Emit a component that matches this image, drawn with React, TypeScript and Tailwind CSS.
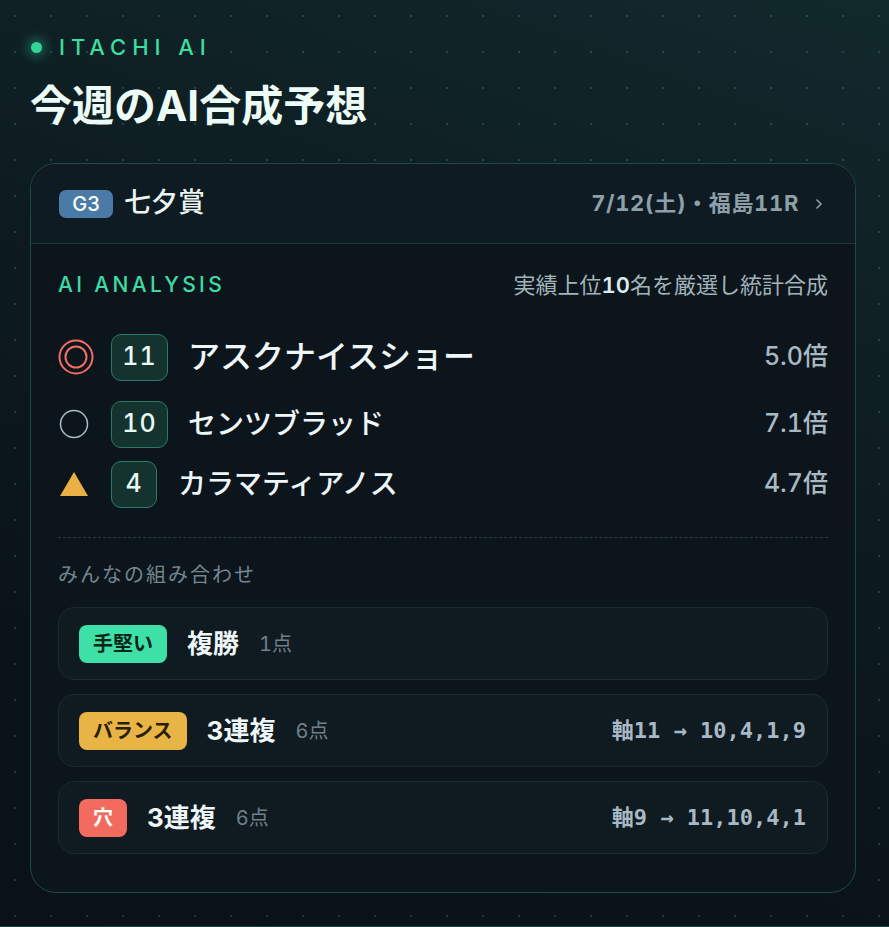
import { ChevronRight } from 'lucide-react';

type Mark = 'double' | 'circle' | 'triangle';

interface Pick {
  mark: Mark;
  num: string;
  name: string;
  odds: string;
  big?: boolean;
}

interface Combo {
  tag: string;
  tagClass: string;
  kind: string;
  points: string;
  detail?: string;
}

const PICKS: Pick[] = [
  { mark: 'double', num: '11', name: 'アスクナイスショー', odds: '5.0倍', big: true },
  { mark: 'circle', num: '10', name: 'センツブラッド', odds: '7.1倍' },
  { mark: 'triangle', num: '4', name: 'カラマティアノス', odds: '4.7倍' },
];

const COMBOS: Combo[] = [
  { tag: '手堅い', tagClass: 'bg-[#3ee0a8] text-[#062519]', kind: '複勝', points: '1点' },
  { tag: 'バランス', tagClass: 'bg-[#e8b445] text-[#2a1d05]', kind: '3連複', points: '6点', detail: '軸11 → 10,4,1,9' },
  { tag: '穴', tagClass: 'bg-[#f26b5e] text-white', kind: '3連複', points: '6点', detail: '軸9 → 11,10,4,1' },
];

function MarkIcon({ mark }: { mark: Mark }) {
  if (mark === 'double') {
    return (
      <svg width="36" height="36" viewBox="0 0 36 36">
        <circle cx="18" cy="18" r="16.5" fill="none" stroke="#ef6f62" strokeWidth="2" />
        <circle cx="18" cy="18" r="10.5" fill="none" stroke="#ef6f62" strokeWidth="2" />
      </svg>
    );
  }
  if (mark === 'circle') {
    return (
      <svg width="36" height="36" viewBox="0 0 36 36">
        <circle cx="16" cy="18" r="13.5" fill="none" stroke="#a9bccb" strokeWidth="1.5" />
      </svg>
    );
  }
  return (
    <svg width="36" height="36" viewBox="0 0 36 36">
      <polygon points="16,6 30,30 2,30" fill="#e9b143" />
    </svg>
  );
}

export default function App() {
  return (
    <div className="min-h-[927px] w-full bg-[linear-gradient(200deg,#12292c_0%,#0d1c21_40%,#0a1319_75%,#0a1218_100%)] font-['Inter','Noto_Sans_CJK_JP',sans-serif] border-b border-[#1b433f]">
      <div className="min-h-[926px] bg-[radial-gradient(circle,rgba(110,190,180,0.22)_1px,transparent_1.6px)] bg-[size:36px_36px] bg-[position:-3px_-2px] px-[30px] pt-[33px]">
        {/* brand */}
        <div className="flex h-[28px] items-center gap-[17px] pl-[1px]">
          <span className="h-[11px] w-[11px] rounded-full bg-[#34d399] shadow-[0_0_12px_3px_rgba(52,211,153,0.45)]" />
          <span className="text-[22px] font-medium tracking-[0.27em] text-[#3ddc9f]">ITACHI AI</span>
        </div>
        <h1 className="mt-[19px] text-[42px] font-bold leading-[52px] text-[#ecfbf6]">今週のAI合成予想</h1>

        {/* card */}
        <div className="mt-[31px] w-[826px] overflow-hidden rounded-[26px] border border-[#1e4a45] bg-[#0c151c]">
          <div className="flex h-[80px] items-center justify-between border-b border-[#1b3a3a] bg-[#0f1b22] px-[28px]">
            <div className="flex items-center gap-[11px]">
              <span className="flex h-[28px] w-[54px] items-center justify-center rounded-[7px] bg-[#4a7aa6] text-[20px] font-medium text-white">G3</span>
              <span className="text-[27px] font-medium text-[#eaf5f2]">七夕賞</span>
            </div>
            <div className="flex items-center gap-[12px] text-[#8d9fa8]">
              <span className="text-[22px] font-bold tracking-[0.03em] tabular-nums">7/12(土)・福島11R</span>
              <ChevronRight size={16} strokeWidth={2.5} />
            </div>
          </div>

          <div className="px-[27px] pb-[38px] pt-[27px]">
            <div className="flex h-[28px] items-center justify-between">
              <span className="text-[21px] font-medium tracking-[0.16em] text-[#3fd9a4]">AI ANALYSIS</span>
              <span className="text-[22px] text-[#a3b3ba]">
                実績上位<span className="font-semibold text-[#dfeaee] tabular-nums">10</span>名を厳選し統計合成
              </span>
            </div>

            <div className="mt-[30px] flex flex-col">
              {PICKS.map((p, i) => (
                <div
                  key={p.num}
                  className={`flex items-center ${p.big ? 'h-[56px]' : 'h-[52px]'} ${i === 1 ? 'mt-[13px]' : i === 2 ? 'mt-[8px]' : ''}`}
                >
                  <div className="flex w-[53px] items-center">
                    <MarkIcon mark={p.mark} />
                  </div>
                  <span
                    className={`flex h-[47px] items-center justify-center rounded-[10px] border-[1.5px] border-[#2c7a66] bg-[#14332f] text-[25px] font-medium tracking-[0.04em] tabular-nums text-[#e8f8f4] ${p.num.length > 1 ? 'w-[57px]' : 'w-[46px]'}`}
                  >
                    {p.num}
                  </span>
                  <span
                    className={`font-medium text-[#eef6f8] ${p.big ? 'ml-[20px] text-[32px]' : p.num.length > 1 ? 'ml-[20px] text-[28px]' : 'ml-[21px] text-[28px]'}`}
                  >
                    {p.name}
                  </span>
                  <span className="ml-auto text-[25px] font-medium tabular-nums text-[#a9b9c2]">{p.odds}</span>
                </div>
              ))}
            </div>

            <div className="mt-[27px] border-t border-dashed border-[#2c3b42]" />

            <div className="mt-[23px] h-[28px] text-[20px] leading-[28px] tracking-[0.1em] text-[#74868e]">みんなの組み合わせ</div>

            <div className="mt-[18px] flex flex-col gap-[14px]">
              {COMBOS.map((c) => (
                <div
                  key={c.tag}
                  className="flex h-[73px] items-center rounded-[16px] border border-[#1c2a31] bg-[#0f1a21] pl-[20px] pr-[21px]"
                >
                  <span className={`flex h-[38px] items-center rounded-[8px] px-[14px] text-[20px] font-bold ${c.tagClass}`}>{c.tag}</span>
                  <span className="ml-[20px] text-[26px] font-bold text-[#eef6f8]">{c.kind}</span>
                  <span className="ml-[20px] text-[20px] tabular-nums text-[#6f8089]">{c.points}</span>
                  {c.detail && (
                    <span className="ml-auto font-['DejaVu_Sans_Mono','Noto_Sans_CJK_JP',monospace] text-[22px] font-bold text-[#a8b8c4]">
                      {c.detail}
                    </span>
                  )}
                </div>
              ))}
            </div>
          </div>
        </div>
      </div>
    </div>
  );
}
